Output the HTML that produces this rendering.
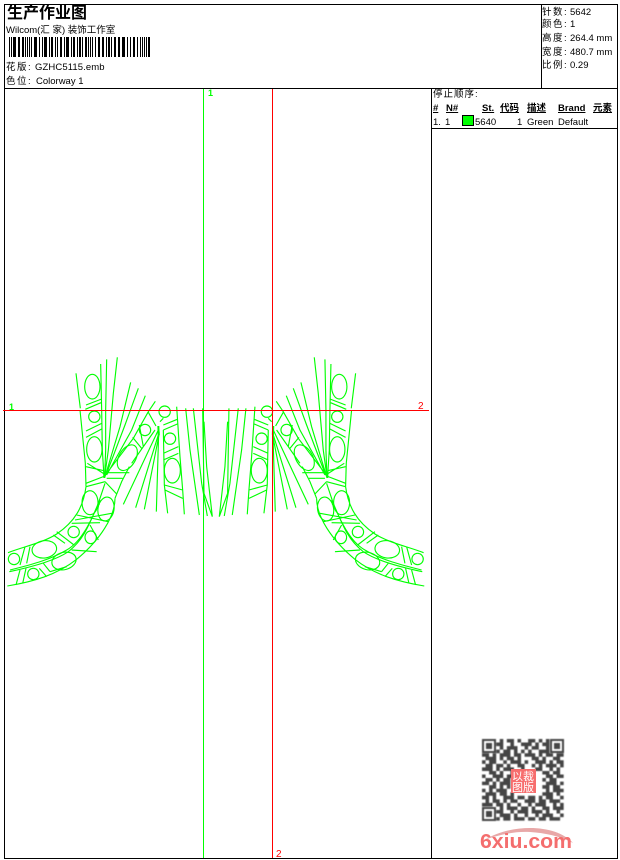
<!DOCTYPE html>
<html><head><meta charset="utf-8"><style>
html,body{margin:0;padding:0;background:#fff;width:620px;height:860px;overflow:hidden}
.t{position:absolute;white-space:nowrap;font:9.5px/12px "Liberation Sans","WenQuanYi Zen Hei","Noto Sans CJK SC",sans-serif;color:#000}
.c{letter-spacing:1.5px}
.b{font-weight:bold;text-decoration:underline}
.l{position:absolute;background:#000}
svg{position:absolute;left:0;top:0}
</style></head><body>
<div class="l" style="left:4px;top:4px;width:614px;height:1px"></div>
<div class="l" style="left:4px;top:858px;width:614px;height:1px"></div>
<div class="l" style="left:4px;top:4px;width:1px;height:855px"></div>
<div class="l" style="left:617px;top:4px;width:1px;height:855px"></div>
<div class="l" style="left:4px;top:88px;width:614px;height:1px"></div>
<div class="l" style="left:541px;top:4px;width:1px;height:85px"></div>
<div class="l" style="left:431px;top:88px;width:1px;height:771px"></div>
<div class="l" style="left:431px;top:128px;width:187px;height:1px"></div>

<div class="t" style="left:7px;top:5px;font-size:16px;line-height:18px;font-weight:bold">生产作业图</div>
<div class="t" style="left:6px;top:25px">Wilcom(汇 家) 装饰工作室</div>
<div class="t c" style="left:6px;top:62px">花版:</div><div class="t" style="left:35px;top:62px;letter-spacing:.1px">GZHC5115.emb</div>
<div class="t c" style="left:6px;top:76px">色位:</div><div class="t" style="left:36px;top:76px">Colorway 1</div>

<div class="t c" style="left:542px;top:7px">针数:</div><div class="t" style="left:570px;top:7px">5642</div>
<div class="t c" style="left:542px;top:19px">颜色:</div><div class="t" style="left:570px;top:19px">1</div>
<div class="t c" style="left:542px;top:33px">高度:</div><div class="t" style="left:570px;top:33px">264.4 mm</div>
<div class="t c" style="left:542px;top:47px">宽度:</div><div class="t" style="left:570px;top:47px">480.7 mm</div>
<div class="t c" style="left:542px;top:60px">比例:</div><div class="t" style="left:570px;top:60px">0.29</div>

<div class="t" style="left:433px;top:89px;letter-spacing:1px">停止顺序:</div>
<div class="t b" style="left:433px;top:103px">#</div>
<div class="t b" style="left:446px;top:103px">N#</div>
<div class="t b" style="left:482px;top:103px">St.</div>
<div class="t b" style="left:500px;top:103px">代码</div>
<div class="t b" style="left:527px;top:103px">描述</div>
<div class="t b" style="left:558px;top:103px">Brand</div>
<div class="t b" style="left:593px;top:103px">元素</div>
<div class="t" style="left:433px;top:117px">1.</div>
<div class="t" style="left:445px;top:117px">1</div>
<div style="position:absolute;left:462px;top:115px;width:10px;height:9px;background:#0f0;border:1px solid #000"></div>
<div class="t" style="left:475px;top:117px">5640</div>
<div class="t" style="left:517px;top:117px">1</div>
<div class="t" style="left:527px;top:117px">Green</div>
<div class="t" style="left:558px;top:117px">Default</div>

<svg width="620" height="860" viewBox="0 0 620 860">
<path shape-rendering="crispEdges" fill="#000" d="M9 37h1v20h-1zM11 37h1v20h-1zM13 37h3v20h-3zM18 37h2v20h-2zM22 37h2v20h-2zM25 37h1v20h-1zM27 37h1v20h-1zM29 37h1v20h-1zM31 37h1v20h-1zM34 37h3v20h-3zM39 37h1v20h-1zM42 37h1v20h-1zM44 37h3v20h-3zM49 37h1v20h-1zM51 37h2v20h-2zM55 37h1v20h-1zM57 37h1v20h-1zM60 37h2v20h-2zM64 37h1v20h-1zM66 37h3v20h-3zM71 37h1v20h-1zM73 37h2v20h-2zM77 37h1v20h-1zM79 37h2v20h-2zM82 37h1v20h-1zM85 37h2v20h-2zM88 37h1v20h-1zM90 37h1v20h-1zM92 37h1v20h-1zM95 37h1v20h-1zM98 37h2v20h-2zM102 37h2v20h-2zM106 37h1v20h-1zM108 37h2v20h-2zM111 37h1v20h-1zM114 37h2v20h-2zM118 37h2v20h-2zM122 37h3v20h-3zM127 37h1v20h-1zM130 37h1v20h-1zM133 37h2v20h-2zM137 37h1v20h-1zM140 37h1v20h-1zM142 37h1v20h-1zM144 37h1v20h-1zM146 37h1v20h-1zM148 37h2v20h-2z"/>

<defs><g id="h" fill="none" stroke="#0f0" stroke-width="3.4">
<ellipse cx="277" cy="110" rx="23" ry="37"/>
<ellipse cx="283" cy="200" rx="17" ry="17"/>
<ellipse cx="283" cy="298" rx="23" ry="38"/>
<ellipse cx="270" cy="458" rx="24" ry="36"/>
<ellipse cx="318" cy="477" rx="24" ry="36" transform="rotate(10 318 477)"/>
<ellipse cx="382" cy="323" rx="25" ry="42" transform="rotate(30 382 323)"/>
<ellipse cx="435" cy="240" rx="17" ry="17"/>
<ellipse cx="510" cy="266" rx="17" ry="17"/>
<ellipse cx="517" cy="362" rx="24" ry="37"/>
<ellipse cx="494" cy="185" rx="17" ry="17"/>
<ellipse cx="133" cy="598" rx="37" ry="26" transform="rotate(-8 133 598)"/>
<ellipse cx="192" cy="633" rx="37" ry="26" transform="rotate(-15 192 633)"/>
<ellipse cx="221" cy="546" rx="17" ry="17"/>
<ellipse cx="272" cy="562" rx="17" ry="19"/>
<ellipse cx="42" cy="627" rx="17" ry="17"/>
<ellipse cx="100" cy="672" rx="17" ry="17"/>
<path d="M228 70L241 175M240 180L250 280L256 340L258 410M302 42L305 180L307 300L312 380M320 28L317 180L317 300L314 380M352 22L340 130L325 300L314 380M392 97L360 230L315 380M415 115L375 225L318 375M436 137L395 240L320 375M466 154L445 185L400 265L320 370"/>
<path d="M258 165L305 147M256 178L303 158M258 243L305 220M258 262L305 237M262 340L313 372M258 350L312 362M258 400L315 378M258 410L315 395M320 368L388 368M320 385L368 385M315 395L350 432M388 350L365 395L345 445M465 240L395 340M445 187L468 228M398 262L425 295M418 225L430 290"/>
<path d="M475 240L370 463M478 245L407 473M478 250L433 478M476 250L469 485M530 170L540 320L548 420L553 493M490 240L492 340L493 405L503 490M490 225L532 208M490 240L532 222M490 310L535 290M490 330L535 310M493 405L548 420M495 420L548 445M480 215L490 205"/>
<path d="M557 175L570 300L598 495M580 175L605 400L622 498M608 175L612 430L637 500M612 215L620 350L637 500"/>
<path d="M258 410C250 470 225 515 170 552C130 578 70 590 24 608M345 445C345 500 300 570 230 628C170 675 100 695 22 708M300 450C275 510 245 575 200 600C150 630 90 645 30 660M295 460C265 530 250 570 205 605C165 632 100 650 28 665M315 400L295 460"/>
<path d="M230 495L325 515M225 510L335 490M215 520L300 518M270 525L295 570M160 555L195 580M170 545L222 585M215 600L290 605M75 590L60 645M90 590L80 640M60 660L48 705M78 655L68 700M118 655L140 680M130 640L150 665M150 665L200 650"/>
<path stroke-width="6" d="M475 228L476 255M313 372L313 384M296 455L296 465"/>
</g></defs>
<g transform="translate(0,350) scale(.33333)"><use href="#h"/></g>
<g transform="matrix(-1 0 0 1 431.6 0) translate(0,350) scale(.33333)"><use href="#h"/></g>

<path shape-rendering="crispEdges" fill="#0f0" d="M203 89h1v769h-1z"/>
<path shape-rendering="crispEdges" fill="#f00" d="M272 89h1v769h-1zM3 410h426v1h-426z"/>
<text x="9" y="410" font-family="Liberation Sans" font-size="9" font-weight="bold" fill="#0f0">1</text>
<text x="208" y="96" font-family="Liberation Sans" font-size="9" font-weight="bold" fill="#0f0">1</text>
<text x="418" y="409" font-family="Liberation Sans" font-size="10" fill="#f00">2</text>
<text x="276" y="857" font-family="Liberation Sans" font-size="10" fill="#f00">2</text>

<defs><filter id="bl"><feGaussianBlur stdDeviation=".5"/></filter></defs>
<g filter="url(#bl)">
<path fill="none" stroke="#444" stroke-width="2" d="M483 740h12v12h-12zM551 740h12v12h-12zM483 808h12v12h-12z"/>
<path fill="#444" d="M486 743h6v6h-6zM554 743h6v6h-6zM486 811h6v6h-6z"/>
<g transform="translate(482,739) scale(3.55)"><path fill="none" stroke="#444" stroke-width="1" d="M5 .5h1M7 .5h2M10 .5h1M13 .5h2M16 .5h1M18 .5h1M4 1.5h2M8 1.5h1M11 1.5h3M15 1.5h1M17 1.5h2M5 2.5h1M7 2.5h3M12 2.5h1M14 2.5h2M18 2.5h1M4 3.5h1M6 3.5h2M9 3.5h1M11 3.5h1M13 3.5h1M16 3.5h3M0 4.5h2M3 4.5h1M5 4.5h3M9 4.5h2M12 4.5h3M16 4.5h1M18 4.5h2M21 4.5h2M1 5.5h3M5 5.5h1M7 5.5h2M10 5.5h1M14 5.5h2M17 5.5h1M20 5.5h2M0 6.5h1M2 6.5h2M6 6.5h1M8 6.5h3M12 6.5h1M15 6.5h3M19 6.5h1M21 6.5h2M1 7.5h2M4 7.5h2M7 7.5h1M10 7.5h2M14 7.5h1M16 7.5h1M18 7.5h3M22 7.5h1M0 8.5h3M4 8.5h1M6 8.5h3M11 8.5h1M15 8.5h2M19 8.5h1M21 8.5h1M2 9.5h2M5 9.5h1M8 9.5h1M17 9.5h2M20 9.5h2M0 10.5h1M3 10.5h3M7 10.5h2M18 10.5h2M21 10.5h2M1 11.5h2M4 11.5h1M6 11.5h2M17 11.5h1M19 11.5h2M0 12.5h2M3 12.5h1M5 12.5h3M18 12.5h3M22 12.5h1M2 13.5h2M5 13.5h1M7 13.5h1M17 13.5h2M20 13.5h2M0 14.5h1M2 14.5h1M4 14.5h3M18 14.5h1M20 14.5h3M1 15.5h3M5 15.5h2M8 15.5h1M17 15.5h3M21 15.5h1M0 16.5h2M3 16.5h1M6 16.5h3M10 16.5h2M13 16.5h2M16 16.5h1M18 16.5h2M22 16.5h1M1 17.5h1M3 17.5h2M6 17.5h1M8 17.5h2M12 17.5h3M16 17.5h2M19 17.5h3M0 18.5h3M4 18.5h2M7 18.5h1M10 18.5h1M13 18.5h1M15 18.5h3M20 18.5h1M22 18.5h1M5 19.5h1M7 19.5h3M11 19.5h2M14 19.5h1M17 19.5h2M20 19.5h3M4 20.5h2M8 20.5h1M10 20.5h3M14 20.5h3M18 20.5h1M21 20.5h1M5 21.5h3M9 21.5h1M12 21.5h1M15 21.5h1M17 21.5h3M22 21.5h1M4 22.5h1M6 22.5h2M9 22.5h3M13 22.5h2M16 22.5h2M19 22.5h3"/></g>
</g>
<rect x="511" y="769" width="25" height="24" fill="#f76e6e"/>
<text x="512" y="780" font-family="WenQuanYi Zen Hei,Noto Sans CJK SC,sans-serif" font-size="11" fill="#fff">以裁</text>
<text x="512" y="791" font-family="WenQuanYi Zen Hei,Noto Sans CJK SC,sans-serif" font-size="11" fill="#fff">图版</text>

<path d="M484 840C500 831 515 828 530 828C548 828 564 833 573 843C560 836 545 833 530 832C515 831 498 835 484 840Z" fill="#e8a8a8"/>
<text x="480" y="848" font-family="Liberation Sans" font-weight="bold" font-size="20" fill="#f46e6e" textLength="92" lengthAdjust="spacingAndGlyphs">6xiu.com</text>
</svg>
</body></html>
